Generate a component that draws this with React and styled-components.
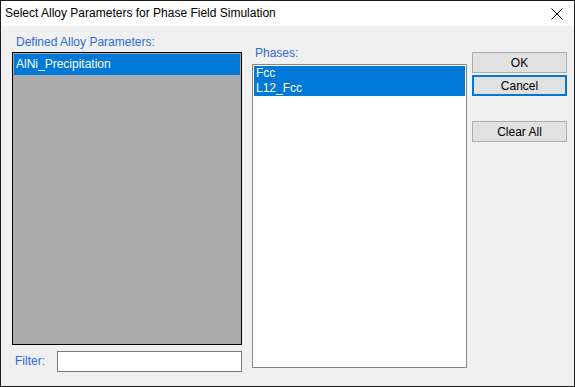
import React from 'react';
import styled, { createGlobalStyle } from 'styled-components';

const GlobalStyle = createGlobalStyle`
  html, body {
    margin: 0;
    padding: 0;
    background: #f0f0f0;
  }
  * {
    box-sizing: border-box;
  }
`;

const Window = styled.div`
  width: 575px;
  height: 387px;
  border: 1px solid #1c1c1c;
  background: #f0f0f0;
  font-family: "Liberation Sans", Arial, sans-serif;
  font-size: 12px;
  color: #000;
  display: flex;
  flex-direction: column;
  overflow: hidden;
`;

const TitleBar = styled.div`
  height: 25px;
  background: #fff;
  display: flex;
  align-items: center;
  justify-content: space-between;
  padding: 0 10px 0 4px;
  flex-shrink: 0;
`;

const Title = styled.span`
  font-size: 12px;
  line-height: 15px;
`;

const CloseIcon = styled.svg`
  width: 12px;
  height: 12px;
  margin-right: 1px;
`;

const Body = styled.div`
  flex: 1;
  display: flex;
  padding: 9px 0 0 11px;
`;

const Column = styled.div`
  display: flex;
  flex-direction: column;
  width: ${(p) => p.$width}px;
  margin-top: ${(p) => p.$top || 0}px;
  margin-right: ${(p) => p.$gap || 0}px;
`;

const Label = styled.div`
  color: #2d6ad8;
  line-height: 15px;
  height: 15px;
  padding-left: ${(p) => p.$indent || 0}px;
  margin-bottom: ${(p) => p.$below || 0}px;
`;

const ListBox = styled.div`
  height: ${(p) => p.$height}px;
  border: 1px solid ${(p) => p.$border};
  background: ${(p) => p.$bg};
  padding: 1px;
`;

const ListItem = styled.div`
  height: ${(p) => p.$height}px;
  line-height: ${(p) => p.$height}px;
  padding-left: 2px;
  background: #0078d7;
  color: #fff;
  white-space: nowrap;
`;

const FilterRow = styled.div`
  display: flex;
  align-items: center;
  margin-top: 6px;
`;

const FilterLabel = styled(Label)`
  width: 45px;
  padding-left: 3px;
`;

const Input = styled.div`
  width: 186px;
  height: 21px;
  background: #fff;
  border: 1px solid #7a7a7a;
`;

const Button = styled.div`
  height: ${(p) => (p.$focused ? 21 : 21)}px;
  background: #e1e1e1;
  border: ${(p) => (p.$focused ? '2px solid #0078d7' : '1px solid #adadad')};
  display: flex;
  align-items: center;
  justify-content: center;
  margin-bottom: ${(p) => p.$below || 0}px;
`;

export default function App() {
  return (
    <>
      <GlobalStyle />
      <Window>
        <TitleBar>
          <Title>Select Alloy Parameters for Phase Field Simulation</Title>
          <CloseIcon viewBox="0 0 12 12">
            <path d="M0.5 0.5 L11.5 11.5 M11.5 0.5 L0.5 11.5" stroke="#000" strokeWidth="1" fill="none" />
          </CloseIcon>
        </TitleBar>
        <Body>
          <Column $width={230} $gap={10}>
            <Label $indent={4} $below={2}>Defined Alloy Parameters:</Label>
            <ListBox $height={293} $border="#000" $bg="#ababab">
              <ListItem $height={21}>AlNi_Precipitation</ListItem>
            </ListBox>
            <FilterRow>
              <FilterLabel>Filter:</FilterLabel>
              <Input />
            </FilterRow>
          </Column>
          <Column $width={215} $top={11} $gap={5}>
            <Label $indent={3} $below={3}>Phases:</Label>
            <ListBox $height={304} $border="#828790" $bg="#fff">
              <ListItem $height={15}>Fcc</ListItem>
              <ListItem $height={15}>L12_Fcc</ListItem>
            </ListBox>
          </Column>
          <Column $width={95} $top={17}>
            <Button $below={2}>OK</Button>
            <Button $focused $below={25}>Cancel</Button>
            <Button>Clear All</Button>
          </Column>
        </Body>
      </Window>
    </>
  );
}
